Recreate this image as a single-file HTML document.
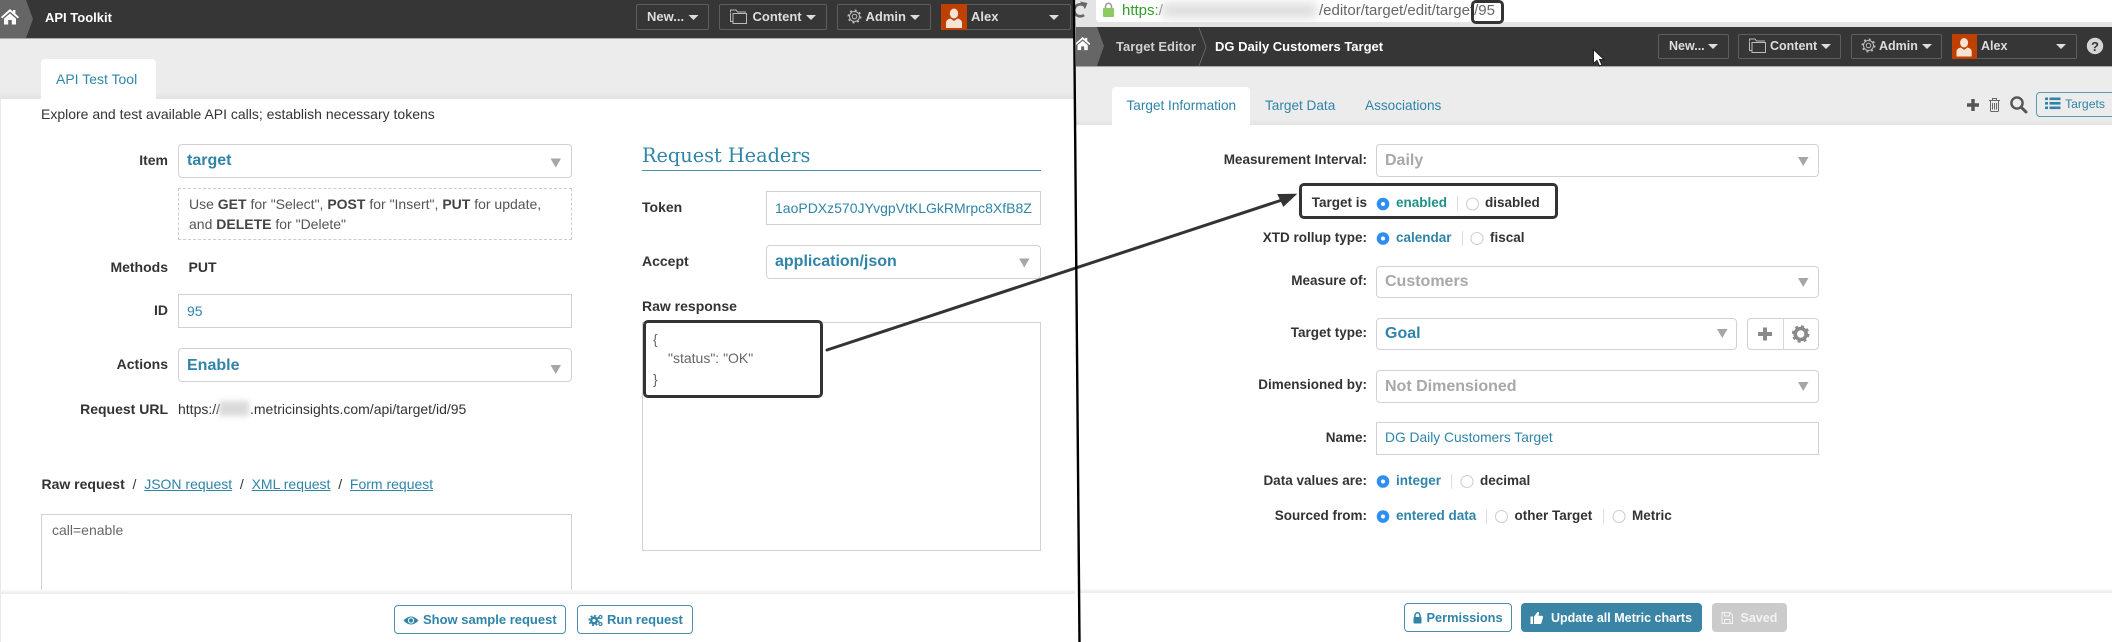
<!DOCTYPE html>
<html><head><meta charset="utf-8"><title>API Toolkit / Target Editor</title>
<style>
*{box-sizing:border-box}
html,body{margin:0;padding:0}
body{width:2112px;height:642px;overflow:hidden;background:#fff;position:relative;font-family:"Liberation Sans",Arial,sans-serif;font-size:14px;color:#333}
#p{position:absolute;left:0;top:0;width:2112px;height:642px;overflow:hidden;filter:blur(.35px)}
.a{position:absolute}
.t{position:absolute;line-height:20px;height:20px;white-space:nowrap}
.b{font-weight:bold}
.l{position:absolute;line-height:20px;height:20px;white-space:nowrap;font-weight:bold;text-align:right;color:#333}
.f{font-size:13.5px}
.blue{color:#2f84a8}
.sel{position:absolute;border:1.5px solid #d2d2d2;border-radius:4px;background:#fff}
.inp{position:absolute;border:1.5px solid #d2d2d2;background:#fff}
.v{font-size:16px;font-weight:bold}
.hb{position:absolute;border:1px solid #5e5e5e;border-radius:2px;color:#ddd;font-weight:bold;font-size:13.5px}
.btn{position:absolute;border:1.2px solid #4a90ae;border-radius:4px;background:#fff;color:#2f84a8;font-weight:bold;font-size:13.5px}
.g{color:#a8a8a8}
.sep{position:absolute;width:1px;height:15px;background:#ddd}
</style></head>
<body><div id="p">

<!-- LEFT PANEL -->
<div class="a" style="left:0;top:0;width:1075px;height:38px;background:#363636"></div>
<div class="a" style="left:0;top:38px;width:1075px;height:1px;background:#a9a9a9"></div>
<div class="a" style="left:0;top:0;width:33px;height:38px;background:#666;clip-path:polygon(0 0,26px 0,33px 19px,26px 38px,0 38px)"></div>
<div class="t b" style="left:45px;top:8px;color:#fff;font-size:13px">API Toolkit</div>

<div class="a" style="left:0;top:39px;width:1075px;height:60px;background:linear-gradient(#ececec 0,#ececec 53px,#e2e2e2 60px)"></div>
<div class="a" style="left:41px;top:59px;width:115px;height:41px;background:#fff;border-radius:4px 4px 0 0"></div>
<div class="t blue" style="left:56px;top:69px;font-size:14px">API Test Tool</div>
<div class="a" style="left:1px;top:99px;width:1074px;height:494px;background:#fff;border-radius:4px 0 0 0"></div>
<div class="a" style="left:0;top:99px;width:1px;height:543px;background:#e8e8e8"></div>

<div class="t" style="left:41px;top:104px;font-size:14px;color:#333">Explore and test available API calls; establish necessary tokens</div>

<div class="l" style="right:1944px;top:150px">Item</div>
<div class="sel" style="left:178px;top:144px;width:394px;height:34px"></div>
<div class="t v blue" style="left:187px;top:151px">target</div>
<div class="a" style="left:178px;top:188px;width:394px;height:52px;border:1px dashed #ccc"></div>
<div class="t" style="left:189px;top:194px;color:#555">Use <b style="color:#444">GET</b> for "Select", <b style="color:#444">POST</b> for "Insert", <b style="color:#444">PUT</b> for update,</div>
<div class="t" style="left:189px;top:214px;color:#555">and <b style="color:#444">DELETE</b> for "Delete"</div>

<div class="l" style="right:1944px;top:257px">Methods</div>
<div class="t b" style="left:188.5px;top:257px">PUT</div>

<div class="l" style="right:1944px;top:300px">ID</div>
<div class="inp" style="left:178px;top:294px;width:394px;height:34px"></div>
<div class="t blue" style="left:187px;top:301px">95</div>

<div class="l" style="right:1944px;top:354px">Actions</div>
<div class="sel" style="left:178px;top:348px;width:394px;height:34px"></div>
<div class="t v blue" style="left:187px;top:356px">Enable</div>

<div class="l" style="right:1944px;top:399px">Request URL</div>
<div class="t" style="left:178px;top:399px">https://</div>
<div class="a" style="left:219px;top:401px;width:30px;height:15px;background:#dadada;filter:blur(3px)"></div>
<div class="t" style="left:250px;top:399px">.metricinsights.com/api/target/id/95</div>

<div class="t" style="left:41.5px;top:474px"><b>Raw request</b>&nbsp; /&nbsp; <span class="blue" style="text-decoration:underline">JSON request</span>&nbsp; /&nbsp; <span class="blue" style="text-decoration:underline">XML request</span>&nbsp; /&nbsp; <span class="blue" style="text-decoration:underline">Form request</span></div>

<div class="a" style="left:41px;top:514px;width:531px;height:90px;border:1.5px solid #d2d2d2"></div>
<div class="t" style="left:52px;top:520px;color:#666">call=enable</div>

<!-- request headers -->
<div class="t blue" style="left:642px;top:144px;height:24px;line-height:24px;font-family:'DejaVu Serif','Liberation Serif',serif;font-size:19.3px">Request Headers</div>
<div class="a" style="left:642px;top:170px;width:399px;height:1px;background:#4a90ae"></div>
<div class="t b" style="left:642px;top:197px">Token</div>
<div class="inp" style="left:766px;top:191px;width:275px;height:34px"></div>
<div class="t blue" style="left:775px;top:198px;font-size:14px;width:262px;overflow:hidden">1aoPDXz570JYvgpVtKLGkRMrpc8XfB8Z</div>
<div class="t b" style="left:642px;top:251px">Accept</div>
<div class="sel" style="left:766px;top:245px;width:275px;height:34px"></div>
<div class="t v blue" style="left:775px;top:252px">application/json</div>
<div class="t b" style="left:642px;top:296px">Raw response</div>
<div class="inp" style="left:642px;top:322px;width:399px;height:229px"></div>
<div class="t" style="left:653px;top:329px;color:#666">{</div>
<div class="t" style="left:668px;top:348px;color:#666">"status": "OK"</div>
<div class="t" style="left:653px;top:369px;color:#666">}</div>
<div class="a" style="left:642.5px;top:320px;width:180px;height:78px;border:3px solid #333;border-radius:5px"></div>

<!-- left footer -->
<div class="a" style="left:1px;top:590px;width:1074px;height:4px;background:linear-gradient(#fafafa,#ececec)"></div>
<div class="a" style="left:1px;top:594px;width:1074px;height:48px;background:#fff"></div>
<div class="btn" style="left:394px;top:605px;width:172px;height:29px"></div>
<div class="t b blue" style="left:423px;top:610px;font-size:13px">Show sample request</div>
<div class="btn" style="left:577px;top:605px;width:116px;height:29px"></div>
<div class="t b blue" style="left:607px;top:610px;font-size:13px">Run request</div>

<!-- left header buttons -->
<div class="hb" style="left:636px;top:4px;width:73px;height:26px"></div>
<div class="t b" style="left:647px;top:7px;color:#ddd;font-size:13px">New...</div>
<div class="hb" style="left:719px;top:4px;width:108px;height:26px"></div>
<div class="t b" style="left:752.5px;top:7px;color:#ddd;font-size:13px">Content</div>
<div class="hb" style="left:837px;top:4px;width:94px;height:26px"></div>
<div class="t b" style="left:865.5px;top:7px;color:#ddd;font-size:13px">Admin</div>
<div class="hb" style="left:941px;top:4px;width:130px;height:26px"></div>
<div class="a" style="left:941px;top:4px;width:26px;height:26px;background:#bf4000"></div>
<div class="t b" style="left:971px;top:7px;color:#ddd;font-size:13px">Alex</div>

<!-- RIGHT PANEL -->
<div class="a" style="left:1076px;top:0;width:1036px;height:27px;background:#e4e4e4"></div>
<div class="a" style="left:1096px;top:0;width:1016px;height:22px;background:#fff;border-radius:0 0 0 3px"></div>
<div class="t" style="left:1122px;top:1px;font-size:15px;color:#2f9e28">https:<span style="color:#777">/</span></div>
<div class="a" style="left:1162px;top:3px;width:155px;height:15px;background:#dedede;filter:blur(5px)"></div>
<div class="t" style="left:1319px;top:1px;font-size:15px;color:#666">/editor/target/edit/target/95</div>
<div class="a" style="left:1471px;top:0;width:33px;height:24px;border:3px solid #333;border-radius:5px"></div>

<div class="a" style="left:1076px;top:27px;width:1036px;height:39px;background:#363636"></div>
<div class="a" style="left:1076px;top:66px;width:1036px;height:1px;background:#a9a9a9"></div>
<div class="a" style="left:1076px;top:27px;width:28px;height:39px;background:#666;clip-path:polygon(0 0,21px 0,28px 19px,21px 39px,0 39px)"></div>
<div class="t b" style="left:1116px;top:37px;color:#d0d0d0;font-size:13px">Target Editor</div>
<div class="t b" style="left:1215px;top:37px;color:#fff;font-size:13px">DG Daily Customers Target</div>

<div class="hb" style="left:1658px;top:34px;width:71px;height:25px"></div>
<div class="t b" style="left:1669px;top:36px;color:#ddd;font-size:12.5px">New...</div>
<div class="hb" style="left:1738px;top:34px;width:103px;height:25px"></div>
<div class="t b" style="left:1770px;top:36px;color:#ddd;font-size:12.5px">Content</div>
<div class="hb" style="left:1851px;top:34px;width:91px;height:25px"></div>
<div class="t b" style="left:1879px;top:36px;color:#ddd;font-size:12.5px">Admin</div>
<div class="hb" style="left:1952px;top:34px;width:125px;height:25px"></div>
<div class="a" style="left:1952px;top:34px;width:25px;height:25px;background:#bf4000"></div>
<div class="t b" style="left:1981px;top:36px;color:#ddd;font-size:12.5px">Alex</div>

<div class="a" style="left:1076px;top:67px;width:1036px;height:58px;background:linear-gradient(#ececec 0,#ececec 52px,#e3e3e3 58px)"></div>
<div class="a" style="left:1112px;top:87px;width:138px;height:39px;background:#fff;border-radius:4px 4px 0 0"></div>
<div class="t blue" style="left:1126.5px;top:96px;font-size:13.6px">Target Information</div>
<div class="t blue" style="left:1265px;top:96px;font-size:13.6px">Target Data</div>
<div class="t blue" style="left:1365px;top:96px;font-size:13.6px">Associations</div>
<div class="a" style="left:2036px;top:92px;width:80px;height:25px;border:1.2px solid #5b9ab6;border-radius:4px"></div>
<div class="t blue" style="left:2065px;top:94px;font-size:12.2px">Targets</div>
<div class="a" style="left:1078px;top:125px;width:1030px;height:468px;background:#fff"></div>
<div class="a" style="left:2108px;top:125px;width:4px;height:468px;background:#fff"></div>

<!-- form -->
<div class="l f" style="right:745px;top:150px">Measurement Interval:</div>
<div class="sel" style="left:1376px;top:144px;width:443px;height:33px"></div>
<div class="t v g" style="left:1385px;top:151px">Daily</div>

<div class="l f" style="right:745px;top:193px">Target is</div>
<div class="t b f" style="left:1396px;top:193px;color:#1f9287">enabled</div>
<div class="sep" style="left:1457px;top:196px"></div>
<div class="t b f" style="left:1485px;top:193px">disabled</div>
<div class="a" style="left:1299px;top:183px;width:259px;height:36px;border:3px solid #333;border-radius:5px"></div>

<div class="l f" style="right:745px;top:228px">XTD rollup type:</div>
<div class="t b f blue" style="left:1396px;top:228px">calendar</div>
<div class="sep" style="left:1462px;top:231px"></div>
<div class="t b f" style="left:1490px;top:228px">fiscal</div>

<div class="l f" style="right:745px;top:271px">Measure of:</div>
<div class="sel" style="left:1376px;top:266px;width:443px;height:32px"></div>
<div class="t v g" style="left:1385px;top:272px">Customers</div>

<div class="l f" style="right:745px;top:323px">Target type:</div>
<div class="sel" style="left:1376px;top:318px;width:361px;height:32px"></div>
<div class="t v blue" style="left:1385px;top:324px">Goal</div>
<div class="sel" style="left:1747px;top:318px;width:72px;height:32px"></div>
<div class="a" style="left:1783px;top:318px;width:1px;height:32px;background:#d8d8d8"></div>

<div class="l f" style="right:745px;top:375px">Dimensioned by:</div>
<div class="sel" style="left:1376px;top:370px;width:443px;height:33px"></div>
<div class="t v g" style="left:1385px;top:377px">Not Dimensioned</div>

<div class="l f" style="right:745px;top:428px">Name:</div>
<div class="inp" style="left:1376px;top:422px;width:443px;height:33px"></div>
<div class="t blue" style="left:1385px;top:428px;font-size:13.8px">DG Daily Customers Target</div>

<div class="l f" style="right:745px;top:471px">Data values are:</div>
<div class="t b f blue" style="left:1396px;top:471px">integer</div>
<div class="sep" style="left:1451px;top:474px"></div>
<div class="t b f" style="left:1480px;top:471px">decimal</div>

<div class="l f" style="right:745px;top:506px">Sourced from:</div>
<div class="t b f blue" style="left:1396px;top:506px">entered data</div>
<div class="sep" style="left:1486px;top:509px"></div>
<div class="t b f" style="left:1514.5px;top:506px">other Target</div>
<div class="sep" style="left:1603px;top:509px"></div>
<div class="t b f" style="left:1632px;top:506px">Metric</div>

<!-- right footer -->
<div class="a" style="left:1078px;top:588px;width:1034px;height:5px;background:linear-gradient(#fff,#eaeaea)"></div>
<div class="btn" style="left:1403.5px;top:603px;width:108px;height:29px"></div>
<div class="t b blue" style="left:1426.5px;top:608px;font-size:12.8px">Permissions</div>
<div class="a" style="left:1521px;top:603px;width:181px;height:29px;background:#3a84a6;border-radius:4px"></div>
<div class="t b" style="left:1551px;top:608px;color:#fff;font-size:12.5px">Update all Metric charts</div>
<div class="a" style="left:1712px;top:603px;width:75px;height:29px;background:#cbcbcb;border-radius:4px"></div>
<div class="t b" style="left:1740.5px;top:608px;color:#f2f2f2;font-size:12.5px">Saved</div>

<!-- ICON + ANNOTATION OVERLAY -->
<svg class="a" style="left:0;top:0" width="2112" height="642" viewBox="0 0 2112 642" xmlns="http://www.w3.org/2000/svg">
<defs>
<path id="home" d="M9 0 L12 2.6 V1 H14.4 V4.7 L18 8 L16.8 9.4 L9 2.6 L1.2 9.4 L0 8 Z M3 9.6 L9 4.4 L15 9.6 V15.5 H10.8 V11 H7.2 V15.5 H3 Z" fill="#fff"/>
<path id="dn" d="M0 0H10L5 5Z"/>
<path id="sa" d="M0 0H10.5L5.25 9Z" fill="#a6a6a6"/>
<g id="folder" fill="none" stroke="#bbb" stroke-width="1"><path d="M.5 3.5V12.5H3"/><path d="M.5 3V1H6L7.5 3H16"/><path d="M3 4.5H16.5V14.5H3Z"/></g>
<g id="cog" fill="none" stroke="#bbb"><circle cx="7" cy="7" r="2.3" stroke-width="1"/><circle cx="7" cy="7" r="5" stroke-width="1"/><circle cx="7" cy="7" r="6.2" stroke-width="1.6" stroke-dasharray="2 2.87"/></g>
<g id="user" fill="#f6e3d6"><ellipse cx="8" cy="5.5" rx="4.2" ry="5"/><path d="M0 20 V15 Q0 11.5 4.5 10.5 L8 13 L11.5 10.5 Q16 11.5 16 15 V20 Z"/></g>
<g id="r1"><circle r="6.3" fill="#2f8ff0"/><circle r="2" fill="#fff"/></g>
<g id="r0"><circle r="6" fill="#fff" stroke="#cfcfcf" stroke-width="1.1"/></g>
</defs>

<use href="#home" x="1" y="9"/>
<use href="#home" transform="translate(1075 37) scale(.85)"/>

<!-- left header icons -->
<use href="#dn" x="688.5" y="15" fill="#ddd"/>
<use href="#dn" x="806" y="15" fill="#ddd"/>
<use href="#dn" x="910" y="15" fill="#ddd"/>
<use href="#dn" x="1049" y="15" fill="#ddd"/>
<use href="#folder" x="730" y="9"/>
<use href="#cog" x="847.5" y="9.5"/>
<use href="#user" x="946" y="8"/>

<!-- right header icons -->
<use href="#dn" x="1708" y="44" fill="#ddd"/>
<use href="#dn" x="1821" y="44" fill="#ddd"/>
<use href="#dn" x="1922" y="44" fill="#ddd"/>
<use href="#dn" x="2056" y="44" fill="#ddd"/>
<use href="#folder" x="1749" y="38"/>
<use href="#cog" x="1861.5" y="38.5"/>
<use href="#user" transform="translate(1956.5 37.5) scale(.95)"/>
<circle cx="2095" cy="46" r="8.2" fill="#d5d5d5"/>
<text x="2095" y="51" text-anchor="middle" font-family="'Liberation Sans',sans-serif" font-weight="bold" font-size="13" fill="#363636">?</text>
<path d="M1199 28 L1206 47 L1199 66" fill="none" stroke="#666" stroke-width="1"/>

<!-- browser chrome -->
<path d="M1083 5 A6 6 0 1 0 1084 15" fill="none" stroke="#666" stroke-width="2.6"/>
<path d="M1080 1.5 L1087.5 3 L1085 9 Z" fill="#666"/>
<path d="M1105.5 9 V6.5 A3 3.2 0 0 1 1111.5 6.5 V9" fill="none" stroke="#9a9a9a" stroke-width="1.6"/>
<rect x="1103" y="8" width="11" height="9" rx="1" fill="#8ccb5e"/>

<!-- cursor -->
<path d="M1593.5 49.5 V63.5 L1597 60.5 L1599.5 66 L1602 65 L1599.5 59.5 L1604 59.5 Z" fill="#fff" stroke="#222" stroke-width="1"/>

<!-- select arrows -->
<use href="#sa" x="550.5" y="158.500"/>
<use href="#sa" x="550.5" y="365"/>
<use href="#sa" x="1019" y="258.500"/>
<use href="#sa" x="1798" y="157"/>
<use href="#sa" x="1798" y="278"/>
<use href="#sa" x="1717" y="329"/>
<use href="#sa" x="1798" y="382"/>

<!-- right tools -->
<path d="M1971.3 99 H1974.7 V103.3 H1979 V106.7 H1974.7 V111 H1971.3 V106.7 H1967 V103.3 H1971.3 Z" fill="#555"/>
<g fill="none" stroke="#666" stroke-width="1"><path d="M1989 100.5 H2000"/><path d="M1990.5 101 V110.5 Q1990.5 111.5 1991.5 111.5 H1997.5 Q1998.5 111.5 1998.5 110.5 V101"/><path d="M1992.5 100 V98.5 H1996.5 V100"/><path d="M1992.5 103 V109.5 M1994.5 103 V109.5 M1996.5 103 V109.5"/></g>
<circle cx="2017" cy="103" r="5.6" fill="none" stroke="#555" stroke-width="2.4"/>
<path d="M2021 107 L2026 112" stroke="#555" stroke-width="3" stroke-linecap="round"/>
<g fill="#2f84a8"><rect x="2045" y="97.500" width="3" height="2.600"/><rect x="2045" y="102" width="3" height="2.600"/><rect x="2045" y="106.500" width="3" height="2.600"/><rect x="2049.500" y="97.500" width="11" height="2.600"/><rect x="2049.500" y="102" width="11" height="2.600"/><rect x="2049.500" y="106.500" width="11" height="2.600"/></g>

<!-- radios -->
<use href="#r1" x="1383" y="204"/><use href="#r0" x="1472.500" y="204"/>
<use href="#r1" x="1383" y="238.500"/><use href="#r0" x="1477" y="238.500"/>
<use href="#r1" x="1383" y="481.500"/><use href="#r0" x="1467" y="481.500"/>
<use href="#r1" x="1383" y="516.500"/><use href="#r0" x="1501.500" y="516.500"/><use href="#r0" x="1619" y="516.500"/>

<!-- plus / gear -->
<path d="M1763 327.500 H1767 V332 H1772 V336 H1767 V340.500 H1763 V336 H1758 V332 H1763 Z" fill="#8a8a8a"/>
<circle cx="1800.700" cy="334" r="5.500" fill="none" stroke="#8a8a8a" stroke-width="3.600"/>
<circle cx="1800.700" cy="334" r="7.600" fill="none" stroke="#8a8a8a" stroke-width="2.400" stroke-dasharray="3 2.970"/>

<!-- footer button icons -->
<path d="M403.500 620.500 Q411 612.500 418.500 620.500 Q411 628.500 403.500 620.500 Z" fill="#2f84a8"/>
<circle cx="411" cy="620.500" r="2.600" fill="#2f84a8" stroke="#fff" stroke-width="1"/>
<circle cx="594" cy="620.500" r="2.800" fill="none" stroke="#2f84a8" stroke-width="2.400"/>
<circle cx="594" cy="620.500" r="4.800" fill="none" stroke="#2f84a8" stroke-width="1.600" stroke-dasharray="2 1.770"/>
<circle cx="600.500" cy="617" r="1.500" fill="none" stroke="#2f84a8" stroke-width="1.200"/>
<circle cx="600.500" cy="624" r="1.500" fill="none" stroke="#2f84a8" stroke-width="1.200"/>
<rect x="1413.500" y="617" width="8" height="6.500" rx="1" fill="#2f84a8"/>
<path d="M1415 617 V615.500 A2.500 2.800 0 0 1 1420 615.500 V617" fill="none" stroke="#2f84a8" stroke-width="1.500"/>
<path d="M1530.500 616.500 H1533 V624 H1530.500 Z M1534 616.500 L1537.500 612 Q1539.500 611.500 1539 614 L1538.300 615.800 H1542 Q1543.500 616.500 1542.800 618 L1541.500 623 Q1541 624 1540 624 H1534 Z" fill="#fff"/>
<g fill="none" stroke="#f2f2f2" stroke-width="1"><path d="M1722 612.500 H1730 L1732.500 615 V623.500 H1722 Z"/><path d="M1724.500 612.500 V616 H1729.500 V612.500"/><path d="M1724.500 623.500 V619.500 H1730 V623.500"/></g>

<!-- annotation arrow -->
<path d="M827 350 L1282 200" stroke="#333" stroke-width="3" fill="none" stroke-linecap="round"/>
<path d="M1278 194.500 L1296 194.300 L1283.500 206 Z" fill="#333" stroke="#333" stroke-width="1"/>

<!-- black divider -->
<path d="M1074 0 L1079.500 642" stroke="#000" stroke-width="2.400" fill="none"/>
</svg>
</div></body></html>
